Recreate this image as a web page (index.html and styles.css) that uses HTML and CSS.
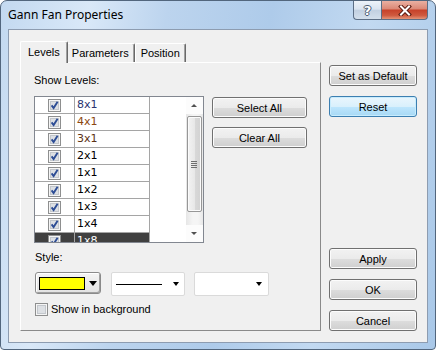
FILE: index.html
```html
<!DOCTYPE html>
<html lang="en">
<head>
    <meta charset="UTF-8">
    <title>Gann Fan Properties</title>
    <link rel="stylesheet" href="styles.css">
</head>
<body>
    <svg class="defs" width="0" height="0">
        <symbol id="box" viewBox="0 0 13 13">
            <rect x="0.5" y="0.5" width="12" height="12" fill="#f5f5f5" stroke="#8e8f8f"/>
            <rect x="2.5" y="2.5" width="8" height="8" fill="#dde0e4" stroke="#c3c7cc"/>
        </symbol>
        <symbol id="chk" viewBox="0 0 13 13">
            <use href="#box"/>
            <path d="M3.6 6.4 L5.6 9 L9.6 2.8" fill="none" stroke="#2d4d95" stroke-width="1.9"/>
        </symbol>
    </svg>

    <div class="window">
        <div class="titlebar">
            <span class="title">Gann Fan Properties</span>
            <div class="caption-btns">
                <span class="cap help">?</span>
                <span class="cap close">
                    <svg width="14" height="11" viewBox="0 0 14 11">
                        <path d="M3 1.5 L11 9.5 M11 1.5 L3 9.5" stroke="#5a1a10" stroke-width="4" stroke-linecap="square"/>
                        <path d="M3 1.5 L11 9.5 M11 1.5 L3 9.5" stroke="#fff" stroke-width="2" stroke-linecap="square"/>
                    </svg>
                </span>
            </div>
        </div>

        <div class="client">
            <div class="tabs-area">
                <div class="tabstrip">
                    <span class="tab active">Levels</span>
                    <span class="tab">Parameters</span>
                    <span class="tab">Position</span>
                </div>
                <div class="panel">
                    <div class="label show-label">Show Levels:</div>
                    <div class="levels-row">
                        <div class="listbox">
                            <div class="grid">
                                <div class="row"><span class="cell-check"><svg class="cb"><use href="#chk"/></svg></span><span class="cell-name c1">8x1</span></div>
                                <div class="row"><span class="cell-check"><svg class="cb"><use href="#chk"/></svg></span><span class="cell-name c2">4x1</span></div>
                                <div class="row"><span class="cell-check"><svg class="cb"><use href="#chk"/></svg></span><span class="cell-name c3">3x1</span></div>
                                <div class="row"><span class="cell-check"><svg class="cb"><use href="#chk"/></svg></span><span class="cell-name">2x1</span></div>
                                <div class="row"><span class="cell-check"><svg class="cb"><use href="#chk"/></svg></span><span class="cell-name">1x1</span></div>
                                <div class="row"><span class="cell-check"><svg class="cb"><use href="#chk"/></svg></span><span class="cell-name">1x2</span></div>
                                <div class="row"><span class="cell-check"><svg class="cb"><use href="#chk"/></svg></span><span class="cell-name">1x3</span></div>
                                <div class="row"><span class="cell-check"><svg class="cb"><use href="#chk"/></svg></span><span class="cell-name">1x4</span></div>
                                <div class="row sel"><span class="cell-check"><svg class="cb"><use href="#chk"/></svg></span><span class="cell-name">1x8</span></div>
                            </div>
                            <div class="vscroll">
                                <div class="arrow-cell"><span class="arr-up"></span></div>
                                <div class="track">
                                    <div class="thumb"><span class="grip"></span></div>
                                </div>
                                <div class="arrow-cell"><span class="arr-down"></span></div>
                            </div>
                        </div>
                        <div class="list-btns">
                            <button class="btn">Select All</button>
                            <button class="btn">Clear All</button>
                        </div>
                    </div>

                    <div class="style-block">
                        <div class="label">Style:</div>
                        <div class="combos">
                            <div class="combo-color">
                                <span class="swatch"></span>
                                <span class="big-arrow"></span>
                            </div>
                            <div class="combo combo-line">
                                <span class="line-sample"></span>
                                <span class="small-arrow"></span>
                            </div>
                            <div class="combo combo-width">
                                <span class="small-arrow"></span>
                            </div>
                        </div>
                        <label class="bg-check">
                            <svg class="cb"><use href="#box"/></svg>
                            <span>Show in background</span>
                        </label>
                    </div>
                </div>
            </div>

            <div class="side-btns">
                <div class="group">
                    <button class="btn">Set as Default</button>
                    <button class="btn default">Reset</button>
                </div>
                <div class="group">
                    <button class="btn">Apply</button>
                    <button class="btn">OK</button>
                    <button class="btn">Cancel</button>
                </div>
            </div>
        </div>
    </div>
</body>
</html>
```

FILE: styles.css
```css
* {
    box-sizing: border-box;
}
body {
    margin: 0;
    font-family: "Liberation Sans", Arial, sans-serif;
    font-size: 11px;
    color: #000;
    background: #fff;
}
.defs {
    position: absolute;
}

/* window frame */
.window {
    width: 436px;
    height: 350px;
    border: 1px solid #52667d;
    border-radius: 7px 7px 4px 4px;
    background: linear-gradient(100deg, #c3d9f0 0%, #d9e8f8 18%, #bcd4ee 34%, #aecbea 55%, #c2d9f1 75%, #a9c8e8 100%);
    display: flex;
    flex-direction: column;
    overflow: hidden;
}
.titlebar {
    height: 28px;
    flex: none;
    display: flex;
    justify-content: space-between;
    align-items: flex-start;
    padding-left: 7px;
}
.title {
    font-family: "Noto Sans", "Open Sans", sans-serif;
    font-size: 12px;
    line-height: 28px;
    color: #000;
}
.caption-btns {
    display: flex;
    margin-right: 7px;
}
.cap {
    height: 19px;
    display: flex;
    align-items: center;
    justify-content: center;
    border: 1px solid #5c6e85;
    border-top: none;
}
.help {
    width: 28px;
    border-right: none;
    border-radius: 0 0 0 4px;
    background: linear-gradient(#edf3f9, #dae4f0 45%, #c2d0e1 52%, #d3dfec);
    font-family: "DejaVu Sans", sans-serif;
    font-weight: bold;
    font-size: 13px;
    color: #fff;
    text-shadow: 1px 0 #4a5a70, -1px 0 #4a5a70, 0 1px #4a5a70, 0 -1px #4a5a70;
}
.close {
    width: 47px;
    border-radius: 0 0 4px 0;
    background: linear-gradient(#eab0a2, #dc8a78 42%, #c7432b 52%, #cf5a3f 80%, #e49478);
}

/* client area */
.client {
    flex: 1;
    margin: 0 7px 6px;
    border: 1px solid #8d9cb0;
    background: #f0f0f0;
    display: flex;
    padding: 11px 0 11px 11px;
}
.tabs-area {
    width: 301px;
    display: flex;
    flex-direction: column;
}
.tabstrip {
    height: 21px;
    flex: none;
    display: flex;
    align-items: flex-end;
    padding-left: 2px;
}
.tab {
    height: 19px;
    padding: 0 5px;
    line-height: 18px;
    background: #f0f0f0;
    border: 1px solid #fff;
    border-right-color: #696969;
    border-bottom: none;
    border-radius: 2px 2px 0 0;
    box-shadow: inset -1px 0 #a0a0a0;
}
.tab.active {
    height: 22px;
    line-height: 20px;
    margin: 0 -2px -1px -2px;
    padding: 0 7px;
    position: relative;
    z-index: 1;
}
.panel {
    flex: 1;
    border: 1px solid;
    border-color: #fff #8a8a8a #8a8a8a #fff;
    padding: 11px 13px;
}
.label {
    height: 13px;
    line-height: 13px;
}
.show-label {
    margin-bottom: 9px;
}

/* levels list */
.levels-row {
    display: flex;
    align-items: flex-start;
    gap: 8px;
}
.listbox {
    width: 171px;
    height: 147px;
    border: 1px solid #828790;
    background: #fff;
    display: flex;
    overflow: hidden;
}
.grid {
    flex: 1;
    overflow: hidden;
}
.row {
    display: flex;
    height: 17px;
}
.cell-check {
    width: 40px;
    display: flex;
    align-items: center;
    justify-content: center;
    border-right: 1px solid #a5a5a5;
    border-bottom: 1px solid #a5a5a5;
}
.cell-name {
    width: 75px;
    padding-left: 2px;
    font-family: "DejaVu Sans", Verdana, sans-serif;
    font-size: 11px;
    line-height: 16px;
    border-right: 1px solid #a5a5a5;
    border-bottom: 1px solid #a5a5a5;
}
.c1 { color: #2a3470; }
.c2 { color: #8c4810; }
.c3 { color: #5c3214; }
.row.sel .cell-check,
.row.sel .cell-name {
    background: #404040;
    color: #fff;
}
.cb {
    width: 13px;
    height: 13px;
    display: block;
}

.vscroll {
    width: 17px;
    display: flex;
    flex-direction: column;
    background: linear-gradient(90deg, #e6e6e6, #f5f5f5 40%, #f5f5f5 70%, #e9e9e9);
}
.arrow-cell {
    height: 17px;
    display: flex;
    align-items: center;
    justify-content: center;
    background: #fcfcfc;
}
.arr-up {
    border-left: 3px solid transparent;
    border-right: 3px solid transparent;
    border-bottom: 3px solid #505050;
}
.arr-down {
    border-left: 3px solid transparent;
    border-right: 3px solid transparent;
    border-top: 3px solid #505050;
}
.track {
    flex: 1;
    padding: 2px 1px 0;
}
.thumb {
    height: 96px;
    border: 1px solid #979797;
    border-radius: 2px;
    background: linear-gradient(90deg, #f3f3f3, #e8e8e8 50%, #d9d9d9 51%, #d2d2d2);
    box-shadow: inset 0 0 0 1px #fbfbfb;
    display: flex;
    align-items: center;
    justify-content: center;
}
.grip {
    width: 6px;
    height: 7px;
    background: repeating-linear-gradient(#6e6e6e 0 1px, transparent 1px 2px);
}

/* buttons */
.btn {
    height: 21px;
    padding: 0;
    font-family: "Liberation Sans", Arial, sans-serif;
    font-size: 11px;
    color: #000;
    border: 1px solid #707070;
    border-radius: 3px;
    background: linear-gradient(#f2f2f2, #ebebeb 50%, #dddddd 51%, #cfcfcf);
    box-shadow: inset 0 0 0 1px #fcfcfc;
}
.btn.default {
    border-color: #3c7fb1;
    background: linear-gradient(#eaf6fd, #d9f0fc 50%, #bee6fd 51%, #a7d9f5);
    box-shadow: inset 0 0 0 1px #c8ecfd;
}
.list-btns {
    width: 96px;
    margin-top: 1px;
    display: flex;
    flex-direction: column;
    gap: 9px;
}
.side-btns {
    width: 88px;
    margin-left: 8px;
    padding-top: 24px;
    display: flex;
    flex-direction: column;
    justify-content: space-between;
}
.group {
    display: flex;
    flex-direction: column;
    gap: 10px;
}

/* style row */
.style-block {
    padding-left: 1px;
    margin-top: 8px;
}
.combos {
    display: flex;
    align-items: flex-start;
    margin-top: 8px;
}
.combo-color {
    width: 66px;
    height: 22px;
    display: flex;
    align-items: center;
    padding: 0 3px;
    gap: 3px;
    border: 1px solid #8a8a8a;
    border-radius: 3px;
    background: linear-gradient(#f4f4f4, #e2e2e2);
    box-shadow: inset 1px 1px #fff, inset -1px -1px #a0a0a0;
}
.swatch {
    width: 46px;
    height: 13px;
    background: #ffff00;
    border: 1px solid #000;
}
.big-arrow {
    border-left: 4px solid transparent;
    border-right: 4px solid transparent;
    border-top: 5px solid #000;
    margin-left: 1px;
}
.combo {
    height: 24px;
    display: flex;
    align-items: center;
    border: 1px solid #dadada;
    border-radius: 2px;
    background: #fff;
}
.combo-line {
    width: 74px;
    margin-left: 10px;
    padding: 0 5px 0 4px;
    justify-content: space-between;
}
.combo-width {
    width: 75px;
    margin-left: 9px;
    padding-right: 6px;
    justify-content: flex-end;
}
.line-sample {
    width: 46px;
    height: 1px;
    background: #000;
}
.small-arrow {
    border-left: 3px solid transparent;
    border-right: 3px solid transparent;
    border-top: 4px solid #000;
}
.bg-check {
    margin-top: 7px;
    display: flex;
    align-items: center;
    gap: 3px;
    line-height: 13px;
}
```
